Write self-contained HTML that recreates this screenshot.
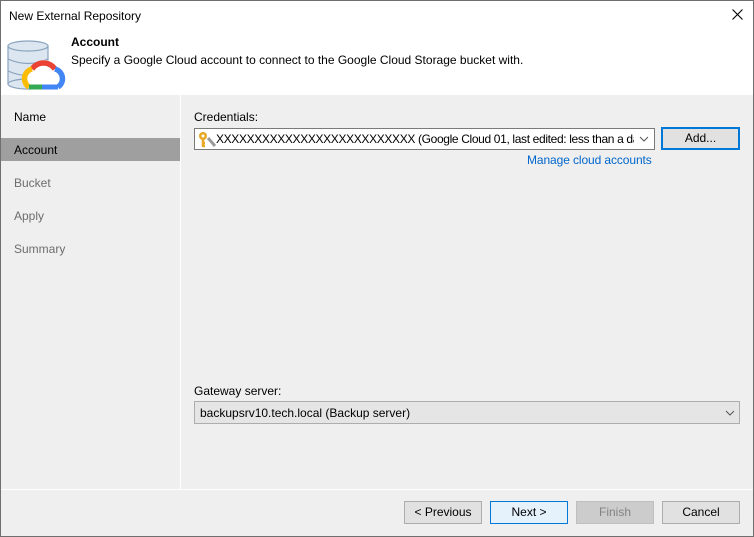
<!DOCTYPE html>
<html><head><style>
*{margin:0;padding:0;box-sizing:border-box}
body{width:754px;height:537px;overflow:hidden;font-family:"Liberation Sans",sans-serif;font-size:12px;color:#000;background:#efefef}
#win{position:absolute;left:0;top:0;width:754px;height:537px;background:#efefef}
#frame{position:absolute;left:0;top:0;width:754px;height:537px;border:1px solid #6f6f6f;z-index:9}
.a{position:absolute}
.top{left:0;top:0;width:754px;height:95px;background:#fff}
.nav{font-size:12px}
.btn{position:absolute;height:23px;border:1px solid #adadad;background:#e1e1e1;text-align:center;line-height:21px;font-size:12px}
</style></head><body>
<div id="win">
<div class="a top"></div>
<div class="a" style="left:9px;top:9px;font-size:12px">New External Repository</div>
<svg class="a" style="left:732px;top:9px" width="11" height="11"><path d="M0.5 0.5L10.5 10.5M10.5 0.5L0.5 10.5" stroke="#000" stroke-width="1.1"/></svg>
<svg class="a" style="left:5px;top:40px" width="62" height="52" viewBox="0 0 62 52">
<g fill="#dce6f0" stroke="#8aa2bd" stroke-width="1.2">
<rect x="3" y="6" width="40" height="38"/>
<ellipse cx="23" cy="44" rx="20" ry="5"/>
<ellipse cx="23" cy="6" rx="20" ry="5"/>
<path d="M3 19q20 9 40 0M3 31q20 9 40 0" fill="none"/>
</g>
<path d="M22 48a11 11 0 0 1 5-19a14 14 0 0 1 27 4a9 9 0 0 1 -2 15z" fill="#fff"/>
<path d="M27 29a14 14 0 0 1 23 0" stroke="#ea4335" stroke-width="5.5" fill="none"/>
<path d="M50 29a10 10 0 0 1 3 18" stroke="#4285f4" stroke-width="5.5" fill="none"/>
<path d="M27 29a10 10 0 0 0 -3 18" stroke="#fbbc05" stroke-width="5.5" fill="none"/>
<path d="M24 47h13" stroke="#34a853" stroke-width="5"/>
<path d="M37 47h16" stroke="#4285f4" stroke-width="5"/>
</svg>
<div class="a" style="left:71px;top:35px;font-weight:bold;font-size:12px">Account</div>
<div class="a" style="left:71px;top:53px;font-size:12px">Specify a Google Cloud account to connect to the Google Cloud Storage bucket with.</div>
<div class="a" style="left:180px;top:95px;width:1px;height:394px;background:#fff"></div>
<div class="a" style="left:0;top:489px;width:754px;height:1px;background:#fff"></div>
<div class="a" style="left:0;top:138px;width:180px;height:23px;background:#9f9f9f"></div>
<div class="a nav" style="left:14px;top:110px">Name</div>
<div class="a nav" style="left:14px;top:143px">Account</div>
<div class="a nav" style="left:14px;top:176px;color:#6d6d6d">Bucket</div>
<div class="a nav" style="left:14px;top:209px;color:#6d6d6d">Apply</div>
<div class="a nav" style="left:14px;top:242px;color:#6d6d6d">Summary</div>
<div class="a" style="left:194px;top:110px;font-size:12px">Credentials:</div>
<div class="a" style="left:194px;top:128px;width:461px;height:22px;background:#fff;border:1px solid #7a7a7a;overflow:hidden">
<svg class="a" style="left:2px;top:2px" width="22" height="17"><circle cx="6" cy="5" r="4" fill="#e7a823"/><circle cx="6" cy="5" r="1.5" fill="#fff"/><path d="M6 8v8M6 12h2M6 15h2" stroke="#e7a823" stroke-width="2.5"/><path d="M11 7l7 8" stroke="#9a9a9a" stroke-width="3"/></svg>
<div class="a" style="left:21px;top:3px;font-size:12px;letter-spacing:-0.35px;white-space:nowrap;width:418px;overflow:hidden">XXXXXXXXXXXXXXXXXXXXXXXXXX (Google Cloud 01, last edited: less than a da</div>
<svg class="a" style="left:444px;top:7px" width="10" height="6"><path d="M1 1l4 4l4-4" stroke="#555" fill="none"/></svg>
</div>
<div class="btn" style="left:661px;top:127px;width:79px;border:2px solid #0078d7;line-height:19px">Add...</div>
<div class="a" style="left:527px;top:153px;color:#0066cc;font-size:12px;letter-spacing:-0.1px">Manage cloud accounts</div>
<div class="a" style="left:194px;top:384px;font-size:12px">Gateway server:</div>
<div class="a" style="left:194px;top:401px;width:546px;height:23px;background:#e5e5e5;border:1px solid #adadad">
<div class="a" style="left:5px;top:4px;font-size:12px">backupsrv10.tech.local (Backup server)</div>
<svg class="a" style="left:530px;top:8px" width="10" height="6"><path d="M1 1l4 4l4-4" stroke="#555" fill="none"/></svg>
</div>
<div class="btn" style="left:404px;top:501px;width:78px">&lt; Previous</div>
<div class="btn" style="left:490px;top:501px;width:78px;border-color:#0078d7;background:#e5f1fb">Next &gt;</div>
<div class="btn" style="left:576px;top:501px;width:78px;background:#cccccc;border-color:#bfbfbf;color:#838383">Finish</div>
<div class="btn" style="left:662px;top:501px;width:78px">Cancel</div>
</div>
<div id="frame"></div>
</body></html>
